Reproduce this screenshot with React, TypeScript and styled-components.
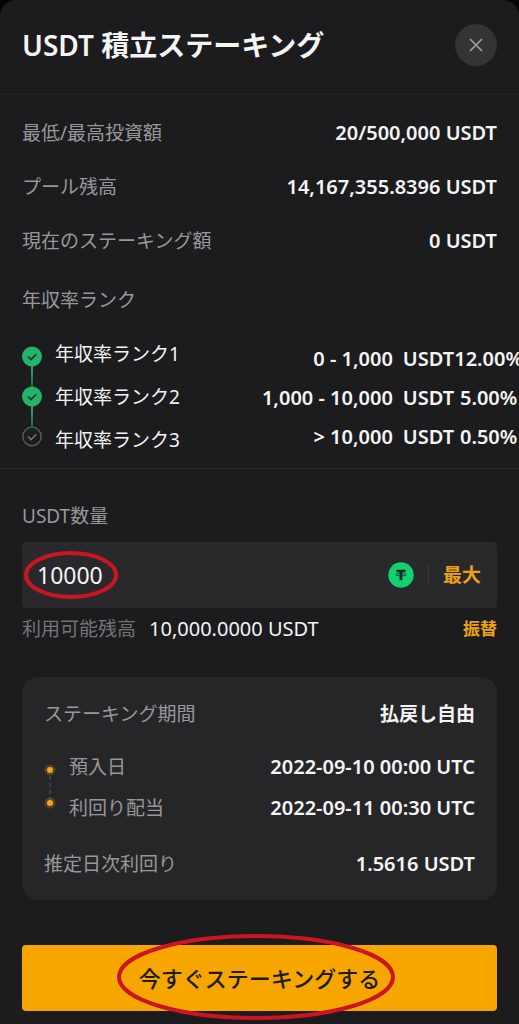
import React, { useState } from 'react';
import styled, { createGlobalStyle } from 'styled-components';

const GlobalStyle = createGlobalStyle`
  *, *::before, *::after { box-sizing: border-box; }
  body {
    margin: 0;
    background: #050506;
    color: #f4f4f5;
    font-family: "Noto Sans", "Noto Sans CJK JP", sans-serif;
    font-size: 19px;
    line-height: 54px;
  }
  button, input { font: inherit; color: inherit; border: 0; padding: 0; background: none; }
  button { cursor: pointer; }
`;

const Sheet = styled.main`
  min-height: 100vh;
  overflow: hidden;
  background: #1c1c1e;
  border-radius: 16px 16px 0 0;
`;

const Header = styled.header`
  display: flex;
  align-items: center;
  justify-content: space-between;
  height: 95px;
  padding: 0 22px 4px;
  border-bottom: 1px solid #252527;
`;

const Title = styled.h1`
  margin: 0;
  font-size: 28px;
  line-height: 40px;
  font-weight: 600;
`;

const CloseButton = styled.button`
  display: grid;
  place-items: center;
  width: 42px;
  height: 42px;
  border-radius: 50%;
  background: #343436;
`;

const Summary = styled.dl`
  margin: 0;
  padding: 11px 22px 0;
`;

const Row = styled.div<{ $height?: number }>`
  display: flex;
  align-items: center;
  justify-content: space-between;
  height: ${({ $height = 54 }) => $height}px;
`;

const Term = styled.dt`
  color: #98989b;
`;

const Value = styled.dd<{ $size?: number }>`
  margin: 0;
  font-size: ${({ $size = 20 }) => $size}px;
  font-weight: 600;
`;

const RankSection = styled.section`
  padding: 5px 0 6px 22px;
  border-bottom: 1px solid #2a2a2c;
`;

const RankHeading = styled.h2`
  margin: 0;
  color: #98989b;
  font-size: 19px;
  font-weight: 400;
`;

const RankBody = styled.div`
  display: flex;
  align-items: center;
  justify-content: space-between;
  padding-top: 6px;
`;

const RankNames = styled.ul`
  flex: 1;
  margin: 0;
  padding: 0 0 0 12px;
  list-style: none;
  line-height: 43px;
  white-space: nowrap;
`;

const RankTable = styled.table`
  margin-right: -4px;
  border-collapse: collapse;
  font-size: 20px;
  font-weight: 600;
  line-height: 39px;
  white-space: nowrap;
  td { padding: 0; text-align: right; }
  td:nth-child(2) { padding-left: 10px; }
  td:nth-child(3) { text-align: center; }
`;

const Form = styled.form`
  padding: 22px 22px 13px;
`;

const AmountLabel = styled.label`
  display: block;
  color: #98989b;
  line-height: 51px;
`;

const AmountBox = styled.div`
  position: relative;
  display: flex;
  align-items: center;
  height: 66px;
  padding: 0 16px 0 15px;
  border-radius: 4px;
  background: #29292b;
`;

const AmountInput = styled.input`
  flex: 1;
  min-width: 0;
  height: 100%;
  font-size: 23px;
  outline: none;
`;

const Divider = styled.span`
  width: 1px;
  height: 22px;
  margin: 0 14px;
  background: #3a3a3c;
`;

const TextButton = styled.button<{ $size: number }>`
  color: #eca213;
  font-size: ${({ $size }) => $size}px;
  font-weight: 700;
  line-height: 28px;
`;

const Balance = styled.div`
  display: flex;
  align-items: center;
  gap: 13px;
  height: 42px;
  margin-bottom: 27px;
  > :last-child { margin-left: auto; }
`;

const BalanceLabel = styled.span`
  color: #747477;
`;

const BalanceValue = styled.span`
  font-size: 20px;
`;

const Card = styled.dl`
  margin: 0 0 45px;
  padding: 10px 22px 9px;
  border-radius: 16px;
  background: #262628;
`;

const Schedule = styled.div`
  display: flex;
  align-items: center;
  padding: 5px 0 9px;
`;

const ScheduleRows = styled.div`
  flex: 1;
  padding-left: 13px;
`;

const SubmitButton = styled.button`
  position: relative;
  display: block;
  width: 100%;
  height: 66px;
  border-radius: 4px;
  background: #f7a600;
  color: #201a10;
  font-size: 22px;
  font-weight: 500;
`;

const Ring = styled.svg<{ $left: string; $top: number }>`
  position: absolute;
  left: ${({ $left }) => $left};
  top: ${({ $top }) => $top}px;
  pointer-events: none;
  fill: none;
  stroke: #cc1522;
  stroke-width: 4;
`;

const ranks = [
  { name: '年収率ランク1', range: '0 - 1,000', rate: '12.00%' },
  { name: '年収率ランク2', range: '1,000 - 10,000', rate: '5.00%' },
  { name: '年収率ランク3', range: '> 10,000', rate: '0.50%' },
];

const summary = [
  ['最低/最高投資額', '20/500,000 USDT'],
  ['プール残高', '14,167,355.8396 USDT'],
  ['現在のステーキング額', '0 USDT'],
];

function RankSteps() {
  return (
    <svg width="21" height="103" viewBox="0 0 21 103" fill="none" aria-hidden="true">
      <defs>
        <linearGradient id="link" x1="0" y1="0" x2="0" y2="1">
          <stop offset="0" stopColor="#25b26b" />
          <stop offset="1" stopColor="#23623f" />
        </linearGradient>
      </defs>
      <rect x="9" y="19" width="2" height="22" fill="url(#link)" />
      <rect x="9" y="59" width="2" height="22" fill="url(#link)" />
      <circle cx="10" cy="10.500" r="10" fill="#25b26b" />
      <circle cx="10" cy="50.500" r="10" fill="#25b26b" />
      <circle cx="10" cy="90.500" r="9.200" stroke="#59595b" strokeWidth="1.500" />
      {[0, 40, 80].map((y) => (
        <path
          key={y}
          d={`M6 ${y + 10.5}l3 3 5.300-5.300`}
          stroke={y === 80 ? '#737376' : '#1b3527'}
          strokeWidth="1.600"
        />
      ))}
    </svg>
  );
}

function TetherIcon() {
  return (
    <svg width="26" height="26" viewBox="0 0 26 26" aria-hidden="true">
      <circle cx="13" cy="13" r="12.700" fill="#14d071" />
      <path d="M8.500 7.800h9v2.500h-3.200v8h-2.700v-8H8.500z" fill="#10271a" />
      <ellipse cx="13" cy="12.700" rx="5.300" ry="1.200" fill="none" stroke="#10271a" strokeWidth=".7" />
    </svg>
  );
}

function ScheduleDots() {
  return (
    <svg width="12" height="46" viewBox="0 0 12 46" aria-hidden="true">
      <path d="M6 12v24" stroke="#5b5b5d" strokeDasharray="4 3" />
      {[6, 39].map((y) => (
        <g key={y} fill="#f0a51a">
          <circle cx="6" cy={y} r="5.500" opacity=".22" />
          <circle cx="6" cy={y} r="3" />
        </g>
      ))}
    </svg>
  );
}

export default function App() {
  const [amount, setAmount] = useState('10000');
  return (
    <Sheet>
      <GlobalStyle />
      <Header>
        <Title>USDT 積立ステーキング</Title>
        <CloseButton type="button" aria-label="閉じる">
          <svg width="14" height="14" viewBox="0 0 14 14" stroke="#a0a0a2" strokeWidth="1.700" aria-hidden="true">
            <path d="M1 1l12 12M13 1L1 13" />
          </svg>
        </CloseButton>
      </Header>

      <Summary>
        {summary.map(([term, value]) => (
          <Row key={term}>
            <Term>{term}</Term>
            <Value>{value}</Value>
          </Row>
        ))}
      </Summary>

      <RankSection>
        <RankHeading>年収率ランク</RankHeading>
        <RankBody>
          <RankSteps />
          <RankNames>
            {ranks.map((rank) => (
              <li key={rank.name}>{rank.name}</li>
            ))}
          </RankNames>
          <RankTable>
            <tbody>
              {ranks.map((rank) => (
                <tr key={rank.name}>
                  <td>{rank.range}</td>
                  <td>USDT</td>
                  <td>{rank.rate}</td>
                </tr>
              ))}
            </tbody>
          </RankTable>
        </RankBody>
      </RankSection>

      <Form onSubmit={(event) => event.preventDefault()}>
        <AmountLabel htmlFor="amount">USDT数量</AmountLabel>
        <AmountBox>
          <AmountInput
            id="amount"
            inputMode="decimal"
            value={amount}
            onChange={(event) => setAmount(event.target.value)}
          />
          <TetherIcon />
          <Divider />
          <TextButton type="button" $size={19} onClick={() => setAmount('10000')}>
            最大
          </TextButton>
          <Ring $left="2px" $top={8} width="95" height="50" aria-hidden="true">
            <ellipse cx="47" cy="25" rx="45" ry="22" />
          </Ring>
        </AmountBox>
        <Balance>
          <BalanceLabel>利用可能残高</BalanceLabel>
          <BalanceValue>10,000.0000 USDT</BalanceValue>
          <TextButton type="button" $size={17}>振替</TextButton>
        </Balance>

        <Card>
          <Row>
            <Term>ステーキング期間</Term>
            <Value $size={19}>払戻し自由</Value>
          </Row>
          <Schedule>
            <ScheduleDots />
            <ScheduleRows>
              <Row $height={41}>
                <Term>預入日</Term>
                <Value>2022-09-10 00:00 UTC</Value>
              </Row>
              <Row $height={41}>
                <Term>利回り配当</Term>
                <Value>2022-09-11 00:30 UTC</Value>
              </Row>
            </ScheduleRows>
          </Schedule>
          <Row>
            <Term>推定日次利回り</Term>
            <Value>1.5616 USDT</Value>
          </Row>
        </Card>

        <SubmitButton type="submit">
          今すぐステーキングする
          <Ring $left="calc(50% - 144px)" $top={-12} width="280" height="88" aria-hidden="true">
            <ellipse cx="140" cy="44" rx="137" ry="41" />
          </Ring>
        </SubmitButton>
      </Form>
    </Sheet>
  );
}
